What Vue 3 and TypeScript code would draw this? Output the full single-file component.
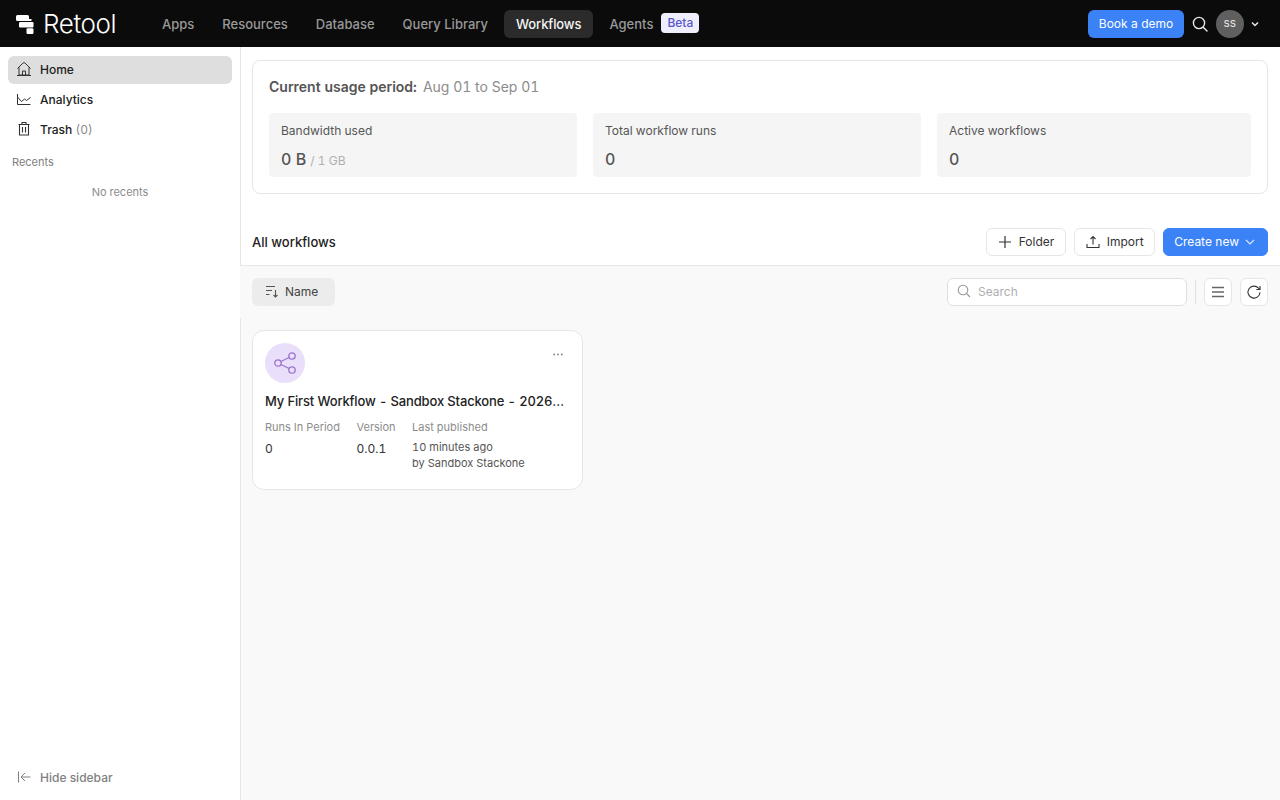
<template>
  <div class="page">
    <header class="topbar">
      <div class="brand">
        <svg class="logo" width="18" height="19" viewBox="0 0 18 19" fill="#fff">
          <path d="M1.500 0H11.500a1.500 1.500 0 0 1 1.500 1.500V4h2.500v2H1.500A1.500 1.500 0 0 1 0 4.500v-3A1.500 1.500 0 0 1 1.500 0z" />
          <rect x="3" y="7" width="14.500" height="5.500" rx="1.200" />
          <rect x="10.500" y="13.300" width="7" height="5.700" rx="1.200" />
        </svg>
        <span class="wordmark">Retool</span>
      </div>
      <nav class="nav">
        <a v-for="item in navItems" :key="item" class="nav-item" :class="{ active: item === 'Workflows' }">{{ item }}</a>
        <span class="beta">Beta</span>
      </nav>
      <div class="top-right">
        <button class="demo">Book a demo</button>
        <svg class="top-search" width="16" height="16" viewBox="0 0 16 16" fill="none" stroke="#e8e8e8" stroke-width="1.400">
          <circle cx="7" cy="7" r="5.600" />
          <path d="M11.200 11.200l3.800 3.800" stroke-linecap="round" />
        </svg>
        <div class="avatar">SS</div>
        <svg width="8" height="6" viewBox="0 0 8 6" fill="none" stroke="#e8e8e8" stroke-width="1.500">
          <path d="M1 1.500l3 3 3-3" />
        </svg>
      </div>
    </header>

    <div class="body">
      <aside class="sidebar">
        <div class="side-list">
          <a class="side-item selected">
            <svg width="16" height="16" viewBox="0 0 16 16" fill="none" stroke="#333" stroke-width="1">
              <path d="M1.500 7.500L6.800 2.200a1.700 1.700 0 0 1 2.400 0L14.500 7.500" />
              <path d="M3 6.500v7.500h10V6.500M6.500 14V10h3v4M1 14.500h14" />
            </svg>
            <span>Home</span>
          </a>
          <a class="side-item">
            <svg width="16" height="16" viewBox="0 0 16 16" fill="none" stroke="#333" stroke-width="1">
              <path d="M1.500 3v10.500h13" />
              <path d="M1.500 6l4 4.500 3-2.500 2 1.500 4-3" />
            </svg>
            <span>Analytics</span>
          </a>
          <a class="side-item">
            <svg width="16" height="16" viewBox="0 0 16 16" fill="none" stroke="#333" stroke-width="1.100">
              <path d="M2.500 3.500h11M6 3.500V1.500h4v2M3.500 3.500V14h9V3.500M6.500 6v5.500M9.500 6v5.500" />
            </svg>
            <span>Trash <em>(0)</em></span>
          </a>
        </div>
        <div class="recents-title">Recents</div>
        <div class="recents-empty">No recents</div>
        <a class="hide-sidebar">
          <svg width="16" height="16" viewBox="0 0 16 16" fill="none" stroke="#808080" stroke-width="1">
            <path d="M2.500 2.500v11M14.500 8H5M9 4L5 8l4 4" />
          </svg>
          <span>Hide sidebar</span>
        </a>
      </aside>

      <main class="main">
        <section class="top-area">
          <div class="usage">
            <div class="usage-title"><strong>Current usage period:</strong><span>Aug 01 to Sep 01</span></div>
            <div class="stats">
              <div v-for="stat in stats" :key="stat.label" class="stat">
                <div class="stat-label">{{ stat.label }}</div>
                <div class="stat-value">{{ stat.value }}<small v-if="stat.limit">/ {{ stat.limit }}</small></div>
              </div>
            </div>
          </div>
          <div class="section-head">
            <h2>All workflows</h2>
            <div class="head-actions">
              <button class="btn">
                <svg width="16" height="16" viewBox="0 0 16 16" fill="none" stroke="#333" stroke-width="1.200">
                  <path d="M8 2v12M2 8h12" />
                </svg>
                Folder
              </button>
              <button class="btn">
                <svg width="16" height="16" viewBox="0 0 16 16" fill="none" stroke="#333" stroke-width="1.100">
                  <path d="M8 10.500V2.500M5.500 5L8 2.500 10.500 5M2 10v3.500h12V10" />
                </svg>
                Import
              </button>
              <button class="btn primary">
                Create new
                <svg width="10" height="6" viewBox="0 0 10 6" fill="none" stroke="#dce8ff" stroke-width="1.100">
                  <path d="M1 1l4 4 4-4" />
                </svg>
              </button>
            </div>
          </div>
        </section>

        <div class="toolbar">
          <button class="sort">
            <svg width="16" height="16" viewBox="0 0 16 16" fill="none" stroke="#555" stroke-width="1.100">
              <path d="M2 3.500h9M2 7.500h6M2 11.500h3.500M11.500 7v7M9.500 12l2 2 2-2" />
            </svg>
            <span>Name</span>
          </button>
          <div class="search">
            <svg width="14" height="14" viewBox="0 0 14 14" fill="none" stroke="#999" stroke-width="1.100">
              <circle cx="6" cy="6" r="4.800" />
              <path d="M9.500 9.500l3.500 3.500" />
            </svg>
            <span>Search</span>
          </div>
          <div class="divider"></div>
          <button class="icon-btn">
            <svg width="16" height="16" viewBox="0 0 16 16" fill="none" stroke="#666" stroke-width="1.500">
              <path d="M2 3.500h12M2 8h12M2 12.500h12" />
            </svg>
          </button>
          <button class="icon-btn">
            <svg width="16" height="16" viewBox="0 0 16 16" fill="none" stroke="#333" stroke-width="1.100">
              <path d="M14 8.200A6 6 0 1 1 12.300 3.900L14 5.500" />
              <path d="M14 2v3.500h-3.600" />
            </svg>
          </button>
        </div>

        <article class="card">
          <div class="card-top">
            <div class="wf-icon">
              <svg width="24" height="24" viewBox="0 0 24 24" fill="none" stroke="#9a74cf" stroke-width="1.300">
                <circle cx="5" cy="12" r="3.200" />
                <circle cx="19" cy="5" r="3.200" />
                <circle cx="19" cy="19" r="3.200" />
                <path d="M7.900 10.500l8.200-4M7.900 13.500l8.200 4" />
              </svg>
            </div>
            <svg class="dots" width="10" height="3" viewBox="0 0 10 3" fill="#808080">
              <circle cx="1.200" cy="1.500" r="0.900" />
              <circle cx="5" cy="1.500" r="0.900" />
              <circle cx="8.800" cy="1.500" r="0.900" />
            </svg>
          </div>
          <h3>My First Workflow - Sandbox Stackone - 2026-08-14</h3>
          <div class="meta">
            <div>
              <label>Runs In Period</label>
              <p>0</p>
            </div>
            <div>
              <label>Version</label>
              <p>0.0.1</p>
            </div>
            <div>
              <label>Last published</label>
              <p class="small">10 minutes ago</p>
              <p class="small by">by Sandbox Stackone</p>
            </div>
          </div>
        </article>
      </main>
    </div>
  </div>
</template>

<script setup lang="ts">
const navItems: string[] = ['Apps', 'Resources', 'Database', 'Query Library', 'Workflows', 'Agents']

const stats: { label: string; value: string; limit?: string }[] = [
  { label: 'Bandwidth used', value: '0 B', limit: '1 GB' },
  { label: 'Total workflow runs', value: '0' },
  { label: 'Active workflows', value: '0' }
]
</script>

<style>
html, body { margin: 0; background: #fff; overflow: hidden; }
</style>

<style scoped>
.page { width: 1280px; height: 800px; display: flex; flex-direction: column; font-family: Inter, "Liberation Sans", sans-serif; font-size: 12px; color: #333; font-variant-numeric: tabular-nums; }
.topbar { height: 47px; flex: none; background: #0b0b0b; display: flex; align-items: center; padding: 0 21px 0 16px; box-sizing: border-box; }
.brand { display: flex; align-items: center; gap: 9px; width: 134px; }
.logo { display: block; margin-top: 1px; }
.wordmark { color: #fff; font-size: 26px; font-weight: 300; letter-spacing: -0.400px; line-height: 1; }
.nav { display: flex; align-items: center; gap: 4px; }
.nav-item { height: 28px; padding: 0 12px; display: flex; align-items: center; border-radius: 6px; font-size: 13px; font-weight: 500; color: #999; }
.nav-item.active { background: #2b2b2b; color: #f5f5f5; letter-spacing: -0.100px; }
.beta { margin-left: -8px; height: 20px; padding: 0 6px; border-radius: 4px; background: #eeeefc; color: #5b57cf; font-size: 12px; font-weight: 500; line-height: 20px; margin-top: -2px; }
.top-right { margin-left: auto; display: flex; align-items: center; }
.demo { width: 96px; height: 28px; border: 0; border-radius: 6px; background: #3b82f6; color: #fff; font: 400 12px Inter, sans-serif; padding: 0; }
.top-search { margin-left: 8px; }
.avatar { width: 28px; height: 28px; border-radius: 50%; background: #5f5f5f; color: #e8e8e8; margin: 0 7px 0 8px; display: flex; align-items: center; justify-content: center; font-size: 9px; font-weight: 500; letter-spacing: 0.400px; }
.body { flex: 1; display: flex; min-height: 0; }
.sidebar { width: 241px; flex: none; box-sizing: border-box; border-right: 1px solid #e6e6e6; background: #fff; display: flex; flex-direction: column; padding: 9px 8px 8px; }
.side-list { display: flex; flex-direction: column; gap: 2px; }
.side-item { height: 28px; box-sizing: border-box; padding: 0 8px 2px; display: flex; align-items: center; gap: 8px; border-radius: 6px; color: #222; font-weight: 500; }
.side-item.selected { background: #dedede; }
.side-item svg { flex: none; }
.side-item em { font-style: normal; color: #8c8c8c; font-weight: 400; }
.recents-title { margin: 10px 0 0 4px; font-size: 11px; line-height: 16px; color: #808080; }
.recents-empty { margin-top: 14px; text-align: center; font-size: 11px; line-height: 16px; color: #8c8c8c; }
.hide-sidebar { margin-top: auto; height: 30px; display: flex; align-items: center; gap: 8px; padding: 0 8px; color: #808080; font-weight: 500; }
.main { flex: 1; min-width: 0; background: #f9f9f9; }
.top-area { background: #fff; border-bottom: 1px solid #e6e6e6; padding: 13px 12px 0 11px; height: 219px; box-sizing: border-box; }
.usage { height: 134px; box-sizing: border-box; border: 1px solid #e6e6e6; border-radius: 8px; padding: 0 16px; }
.usage-title { height: 52px; box-sizing: border-box; padding-bottom: 2px; display: flex; align-items: center; gap: 6px; font-size: 14px; color: #8c8c8c; }
.usage-title strong { font-weight: 600; color: #555; }
.stats { display: grid; grid-template-columns: 308fr 328fr 314fr; gap: 16px; }
.stat { height: 64px; background: #f5f5f5; border-radius: 4px; padding: 10px 12px 0; box-sizing: border-box; }
.stat-label { line-height: 16px; color: #555; }
.stat-value { margin-top: 8px; font-size: 16px; font-weight: 500; line-height: 24px; color: #555; }
.stat-value small { margin-left: 4px; font-size: 12px; font-weight: 400; color: #b0b0b0; }
.section-head { height: 71px; display: flex; align-items: center; justify-content: space-between; padding-top: 24px; box-sizing: border-box; }
h2 { margin: 0; font-size: 13px; font-weight: 500; color: #222; }
.head-actions { display: flex; gap: 8px; }
.btn { height: 28px; box-sizing: border-box; display: flex; align-items: center; gap: 6px; padding: 0 10.500px 0 10px; background: #fff; border: 1px solid #e6e6e6; border-radius: 6px; color: #333; font: 400 12px Inter, sans-serif; }
.btn.primary { background: #3b82f6; border-color: #3b82f6; color: #fff; padding-right: 12px; }
.toolbar { display: flex; align-items: center; margin-left: -1px; padding: 12px; background: #f9f9f9; height: 28px; box-sizing: content-box; }
.sort { width: 83px; height: 28px; border: 0; border-radius: 6px; background: #ececec; display: flex; align-items: center; gap: 5px; padding: 0 0 2px 12px; color: #444; font: 400 12px Inter, sans-serif; margin-right: auto; box-sizing: border-box; }
.search { width: 240px; height: 28px; box-sizing: border-box; border: 1px solid #e0e0e0; border-radius: 6px; background: #fff; display: flex; align-items: center; gap: 7px; padding: 0 0 2px 9px; color: #b0b0b0; }
.divider { width: 1px; height: 24px; background: #e0e0e0; margin: 0 8px; }
.icon-btn { width: 28px; height: 28px; box-sizing: border-box; border: 1px solid #e6e6e6; border-radius: 6px; background: #fff; display: flex; align-items: center; justify-content: center; padding: 0; }
.icon-btn + .icon-btn { margin-left: 8px; }
.card { width: 331px; height: 160px; box-sizing: border-box; margin: 12px 0 0 11px; background: #fff; border: 1px solid #e6e6e6; border-radius: 12px; padding: 12px; }
.card-top { display: flex; justify-content: space-between; }
.wf-icon { width: 40px; height: 40px; border-radius: 50%; background: #e9dffa; display: flex; align-items: center; justify-content: center; }
.dots { margin: 10px 7px 0 0; }
h3 { margin: 10px 0 0; font-size: 13px; line-height: 16px; font-weight: 500; color: #222; white-space: nowrap; overflow: hidden; text-overflow: ellipsis; letter-spacing: -0.150px; }
.meta { display: flex; gap: 16.500px; margin-top: 10px; }
.meta label { display: block; font-size: 11px; line-height: 16px; color: #8c8c8c; }
.meta p { margin: 6px 0 0; font-size: 12px; line-height: 16px; color: #333; }
.meta p.small { font-size: 11px; color: #555; margin-top: 4px; }
.meta p.by { margin-top: 0; }
</style>
